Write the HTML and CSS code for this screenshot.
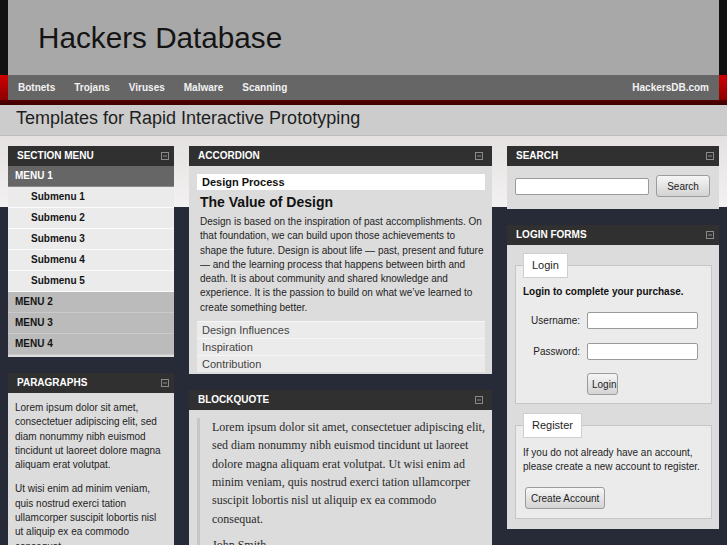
FILE: index.html
```html
<!DOCTYPE html>
<html lang="en">
<head>
<meta charset="utf-8">
<title>Hackers Database</title>
<link rel="stylesheet" href="styles.css">
</head>
<body>
<header class="masthead">
  <div class="brand">
    <h1 class="site-title">Hackers Database</h1>
  </div>
</header>
<nav class="navband">
  <div class="navbar">
    <ul class="nav-links">
      <li><a class="nav-link" href="#">Botnets</a></li>
      <li><a class="nav-link" href="#">Trojans</a></li>
      <li><a class="nav-link" href="#">Viruses</a></li>
      <li><a class="nav-link" href="#">Malware</a></li>
      <li><a class="nav-link" href="#">Scanning</a></li>
    </ul>
    <a class="nav-link nav-site" href="#">HackersDB.com</a>
  </div>
</nav>
<div class="tagline">Templates for Rapid Interactive Prototyping</div>

<main class="columns">
  <div class="col col-left">
    <section class="panel">
      <div class="panel-head"><span class="panel-title">SECTION MENU</span><svg class="collapse" width="8" height="8" viewBox="0 0 8 8"><rect x="0.5" y="0.5" width="7" height="7" fill="none" stroke="#8a8a8a"/><line x1="2" y1="4" x2="6" y2="4" stroke="#8a8a8a"/></svg></div>
      <ul class="menu">
        <li class="menu-item menu-active">MENU 1</li>
        <li class="submenu-item">Submenu 1</li>
        <li class="submenu-item">Submenu 2</li>
        <li class="submenu-item">Submenu 3</li>
        <li class="submenu-item">Submenu 4</li>
        <li class="submenu-item">Submenu 5</li>
        <li class="menu-item">MENU 2</li>
        <li class="menu-item">MENU 3</li>
        <li class="menu-item">MENU 4</li>
      </ul>
    </section>
    <section class="panel">
      <div class="panel-head"><span class="panel-title">PARAGRAPHS</span><svg class="collapse" width="8" height="8" viewBox="0 0 8 8"><rect x="0.5" y="0.5" width="7" height="7" fill="none" stroke="#8a8a8a"/><line x1="2" y1="4" x2="6" y2="4" stroke="#8a8a8a"/></svg></div>
      <div class="text-body">
        <p>Lorem ipsum dolor sit amet, consectetuer adipiscing elit, sed diam nonummy nibh euismod tincidunt ut laoreet dolore magna aliquam erat volutpat.</p>
        <p>Ut wisi enim ad minim veniam, quis nostrud exerci tation ullamcorper suscipit lobortis nisl ut aliquip ex ea commodo consequat.</p>
      </div>
    </section>
  </div>

  <div class="col col-main">
    <section class="panel">
      <div class="panel-head"><span class="panel-title">ACCORDION</span><svg class="collapse" width="8" height="8" viewBox="0 0 8 8"><rect x="0.5" y="0.5" width="7" height="7" fill="none" stroke="#8a8a8a"/><line x1="2" y1="4" x2="6" y2="4" stroke="#8a8a8a"/></svg></div>
      <div class="acc-body">
        <div class="acc-open">Design Process</div>
        <div class="acc-content">
          <h2 class="acc-heading">The Value of Design</h2>
          <p class="acc-text">Design is based on the inspiration of past accomplishments. On that foundation, we can build upon those achievements to shape the future. Design is about life — past, present and future — and the learning process that happens between birth and death. It is about community and shared knowledge and experience. It is the passion to build on what we’ve learned to create something better.</p>
        </div>
        <ul class="acc-list">
          <li class="acc-item">Design Influences</li>
          <li class="acc-item">Inspiration</li>
          <li class="acc-item">Contribution</li>
        </ul>
      </div>
    </section>
    <section class="panel">
      <div class="panel-head"><span class="panel-title">BLOCKQUOTE</span><svg class="collapse" width="8" height="8" viewBox="0 0 8 8"><rect x="0.5" y="0.5" width="7" height="7" fill="none" stroke="#8a8a8a"/><line x1="2" y1="4" x2="6" y2="4" stroke="#8a8a8a"/></svg></div>
      <div class="quote-body">
        <blockquote class="quote">
          <p>Lorem ipsum dolor sit amet, consectetuer adipiscing elit, sed diam nonummy nibh euismod tincidunt ut laoreet dolore magna aliquam erat volutpat. Ut wisi enim ad minim veniam, quis nostrud exerci tation ullamcorper suscipit lobortis nisl ut aliquip ex ea commodo consequat.</p>
          <p class="quote-cite">John Smith</p>
        </blockquote>
      </div>
    </section>
  </div>

  <div class="col col-right">
    <section class="panel">
      <div class="panel-head"><span class="panel-title">SEARCH</span><svg class="collapse" width="8" height="8" viewBox="0 0 8 8"><rect x="0.5" y="0.5" width="7" height="7" fill="none" stroke="#8a8a8a"/><line x1="2" y1="4" x2="6" y2="4" stroke="#8a8a8a"/></svg></div>
      <div class="search-body">
        <input class="field search-field" type="text">
        <button class="btn search-btn" type="button">Search</button>
      </div>
    </section>
    <section class="panel">
      <div class="panel-head"><span class="panel-title">LOGIN FORMS</span><svg class="collapse" width="8" height="8" viewBox="0 0 8 8"><rect x="0.5" y="0.5" width="7" height="7" fill="none" stroke="#8a8a8a"/><line x1="2" y1="4" x2="6" y2="4" stroke="#8a8a8a"/></svg></div>
      <div class="forms-body">
        <fieldset class="box">
          <legend class="box-legend">Login</legend>
          <p class="box-lead">Login to complete your purchase.</p>
          <div class="login-grid">
            <label class="field-label">Username:</label>
            <input class="field login-field" type="text">
            <label class="field-label">Password:</label>
            <input class="field login-field" type="password">
            <button class="btn login-btn" type="button">Login</button>
          </div>
        </fieldset>
        <fieldset class="box box-register">
          <legend class="box-legend">Register</legend>
          <p class="box-text">If you do not already have an account, please create a new account to register.</p>
          <button class="btn create-btn" type="button">Create Account</button>
        </fieldset>
      </div>
    </section>
    <section class="panel">
      <div class="panel-head"><span class="panel-title">LOGIN STATUS</span><svg class="collapse" width="8" height="8" viewBox="0 0 8 8"><rect x="0.5" y="0.5" width="7" height="7" fill="none" stroke="#8a8a8a"/><line x1="2" y1="4" x2="6" y2="4" stroke="#8a8a8a"/></svg></div>
      <div class="text-body"><p>You are not logged in.</p></div>
    </section>
  </div>
</main>
</body>
</html>
```

FILE: styles.css
```css
html, body {
  margin: 0;
  padding: 0;
}
body {
  background: #262b37;
  font-family: "Liberation Sans", Arial, sans-serif;
  color: #222;
  overflow: hidden;
}
ul {
  list-style: none;
  margin: 0;
  padding: 0;
}

/* masthead */
.masthead {
  background: #111;
  padding: 0 8px;
}
.brand {
  background: #a8a8a8;
  height: 75px;
  box-sizing: border-box;
  padding: 21px 0 0 30px;
}
.site-title {
  margin: 0;
  font-weight: normal;
  font-size: 29.7px;
  line-height: 34px;
  color: #141414;
}

/* navigation */
.navband {
  background: linear-gradient(to bottom, #d00000 0, #8c0000 25px, #560000 25px, #3c0000 30px);
  padding: 0 8px 5px;
}
.navbar {
  background: #666;
  height: 25px;
  display: flex;
  justify-content: space-between;
  align-items: center;
  padding: 0 10px;
}
.nav-links {
  display: flex;
  gap: 19px;
}
.nav-link {
  color: #f2f2f2;
  text-decoration: none;
  font-weight: bold;
  font-size: 10px;
  line-height: 25px;
}

/* tagline */
.tagline {
  background: #cccccc;
  height: 31px;
  box-sizing: border-box;
  padding: 1px 0 6px 16px;
  font-size: 18px;
  line-height: 24px;
  color: #1e1e1e;
  border-bottom: 1px solid #bdbdbd;
}

/* columns */
.columns {
  display: flex;
  align-items: flex-start;
  gap: 15px;
  padding: 10px 8px 0;
  background: linear-gradient(to bottom, #e5e1e1 0, #f3f1f1 71px, #262b37 71px);
}
.col-left { width: 166px; flex: none; }
.col-main { width: 303px; flex: none; }
.col-right { width: 212px; flex: none; }

.panel {
  background: #dcdcdc;
  margin-bottom: 16px;
}
.panel-head {
  background: #303030;
  height: 20px;
  display: flex;
  justify-content: space-between;
  align-items: center;
  padding: 0 5px 0 9px;
}
.col-main .panel-head {
  padding-right: 9px;
}
.panel-title {
  color: #fff;
  font-weight: bold;
  font-size: 10px;
  line-height: 20px;
}
.collapse {
  display: block;
}

/* section menu */
.menu {
  padding-bottom: 2px;
}
.menu-item,
.submenu-item {
  height: 20px;
  line-height: 20px;
  font-size: 10px;
  font-weight: bold;
  border-bottom: 1px solid #cacaca;
}
.menu-item {
  background: #bbbbbb;
  color: #141414;
  padding-left: 7px;
}
.menu-active {
  background: #666;
  color: #fff;
  border-bottom-color: #8a8a8a;
}
.submenu-item {
  background: #ebebeb;
  color: #141414;
  padding-left: 23px;
  border-bottom-color: #fbfbfb;
}

/* paragraphs */
.text-body {
  padding: 8px 7px 1px;
}
.text-body p {
  margin: 0 0 10px;
  font-size: 10px;
  line-height: 14.3px;
  color: #1e1e1e;
}

/* accordion */
.acc-body {
  padding: 8px 7px 2px 8px;
}
.acc-open {
  background: #fff;
  height: 16px;
  line-height: 16px;
  font-size: 11px;
  font-weight: bold;
  padding-left: 5px;
  color: #111;
}
.acc-content {
  padding-left: 3px;
}
.acc-heading {
  margin: 3px 0 4px;
  font-size: 14px;
  line-height: 18px;
  color: #111;
}
.acc-text {
  margin: 0;
  font-size: 10px;
  line-height: 14.3px;
  color: #1e1e1e;
}
.acc-list {
  margin-top: 6px;
}
.acc-item {
  background: #ebebeb;
  border-top: 1px solid #f6f6f6;
  height: 16px;
  line-height: 16px;
  font-size: 11px;
  color: #444;
  padding-left: 5px;
}

/* blockquote */
.quote-body {
  padding: 8px 4px 4px 8px;
}
.quote {
  margin: 0;
  border-left: 3px solid #c6c6c6;
  padding-left: 12px;
  font-family: "Liberation Serif", "Times New Roman", serif;
  font-size: 12px;
  line-height: 18.3px;
  color: #2a2a2a;
}
.quote p {
  margin: 0 0 8px;
}

/* forms */
.field {
  display: block;
  box-sizing: border-box;
  height: 17px;
  margin: 0;
  padding: 0 3px;
  background: #fff;
  border: 1px solid #9a9a9a;
  border-radius: 2px;
  font-family: "Liberation Sans", Arial, sans-serif;
  font-size: 10px;
}
.btn {
  display: block;
  box-sizing: border-box;
  height: 22px;
  margin: 0;
  padding: 0 4px;
  background: linear-gradient(to bottom, #f6f6f6, #d3d3d3);
  border: 1px solid #9c9c9c;
  border-radius: 3px;
  font-family: "Liberation Sans", Arial, sans-serif;
  font-size: 10px;
  color: #1e1e1e;
  white-space: nowrap;
}
.search-body {
  display: flex;
  align-items: center;
  gap: 7px;
  padding: 9px 8px 12px;
}
.search-field {
  width: 134px;
}
.search-btn {
  width: 54px;
}

.forms-body {
  padding: 8px 7px 10px 8px;
}
.box {
  margin: 0;
  padding: 0 7px 8px;
  border: 1px solid #c6c6c6;
  background: #ebebeb;
  min-width: 0;
}
.box-register {
  margin-top: 9px;
  padding-bottom: 9px;
}
.box-legend {
  padding: 0 8px;
  border: 1px solid #cfcfcf;
  background: #fff;
  font-size: 11px;
  line-height: 23px;
  color: #1e1e1e;
}
.box-lead {
  margin: 7px 0 0;
  font-size: 10px;
  font-weight: bold;
  line-height: 14px;
  color: #111;
}
.login-grid {
  display: grid;
  grid-template-columns: 57px 111px;
  column-gap: 7px;
  row-gap: 14px;
  align-items: center;
  margin-top: 13px;
}
.field-label {
  text-align: right;
  font-size: 10px;
  color: #222;
}
.login-btn {
  grid-column: 2;
  justify-self: start;
  width: 31px;
  margin-top: -1px;
}
.box-text {
  margin: 8px 0 0;
  font-size: 10px;
  line-height: 14px;
  color: #1e1e1e;
}
.create-btn {
  margin: 13px 0 0 2px;
  padding: 0 5px;
}
```
